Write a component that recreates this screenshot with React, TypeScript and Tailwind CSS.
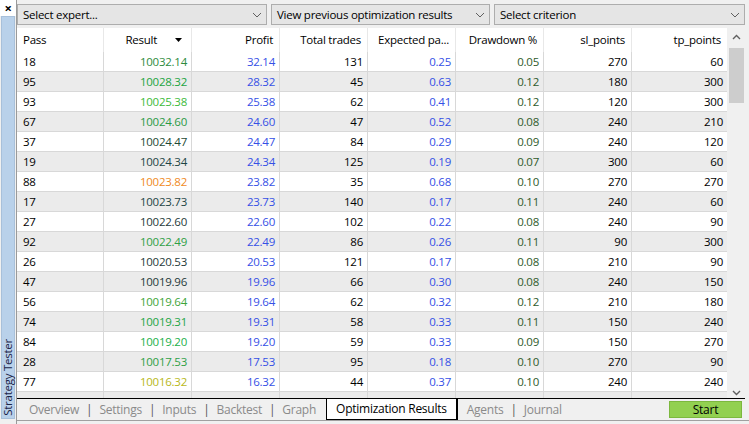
import React from 'react';

// Optimization results grid (MT5 strategy tester)

type Row = {
  pass: number;
  result: string;
  color: string;
  profit: string;
  trades: number;
  payoff: string;
  drawdown: string;
  sl: number;
  tp: number;
};

const ROWS: Row[] = [
  { pass: 18, result: '10032.14', color: '#2e8b3e', profit: '32.14', trades: 131, payoff: '0.25', drawdown: '0.05', sl: 270, tp: 60 },
  { pass: 95, result: '10028.32', color: '#22a43f', profit: '28.32', trades: 45, payoff: '0.63', drawdown: '0.12', sl: 180, tp: 300 },
  { pass: 93, result: '10025.38', color: '#3cba3a', profit: '25.38', trades: 62, payoff: '0.41', drawdown: '0.12', sl: 120, tp: 300 },
  { pass: 67, result: '10024.60', color: '#2a9a45', profit: '24.60', trades: 47, payoff: '0.52', drawdown: '0.08', sl: 240, tp: 210 },
  { pass: 37, result: '10024.47', color: '#1e4a35', profit: '24.47', trades: 84, payoff: '0.29', drawdown: '0.09', sl: 240, tp: 120 },
  { pass: 19, result: '10024.34', color: '#1e4545', profit: '24.34', trades: 125, payoff: '0.19', drawdown: '0.07', sl: 300, tp: 60 },
  { pass: 88, result: '10023.82', color: '#f08a24', profit: '23.82', trades: 35, payoff: '0.68', drawdown: '0.10', sl: 270, tp: 270 },
  { pass: 17, result: '10023.73', color: '#1e4545', profit: '23.73', trades: 140, payoff: '0.17', drawdown: '0.11', sl: 240, tp: 60 },
  { pass: 27, result: '10022.60', color: '#1f3a3a', profit: '22.60', trades: 102, payoff: '0.22', drawdown: '0.08', sl: 240, tp: 90 },
  { pass: 92, result: '10022.49', color: '#2fa045', profit: '22.49', trades: 86, payoff: '0.26', drawdown: '0.11', sl: 90, tp: 300 },
  { pass: 26, result: '10020.53', color: '#1f3a3a', profit: '20.53', trades: 121, payoff: '0.17', drawdown: '0.08', sl: 210, tp: 90 },
  { pass: 47, result: '10019.96', color: '#1f3a3a', profit: '19.96', trades: 66, payoff: '0.30', drawdown: '0.08', sl: 240, tp: 150 },
  { pass: 56, result: '10019.64', color: '#3ea53a', profit: '19.64', trades: 62, payoff: '0.32', drawdown: '0.12', sl: 210, tp: 180 },
  { pass: 74, result: '10019.31', color: '#23a545', profit: '19.31', trades: 58, payoff: '0.33', drawdown: '0.11', sl: 150, tp: 240 },
  { pass: 84, result: '10019.20', color: '#22b04a', profit: '19.20', trades: 59, payoff: '0.33', drawdown: '0.09', sl: 150, tp: 270 },
  { pass: 28, result: '10017.53', color: '#2fa045', profit: '17.53', trades: 95, payoff: '0.18', drawdown: '0.10', sl: 270, tp: 90 },
  { pass: 77, result: '10016.32', color: '#b8b820', profit: '16.32', trades: 44, payoff: '0.37', drawdown: '0.10', sl: 240, tp: 240 },
  { pass: 30, result: '10014.85', color: '#b8b820', profit: '14.85', trades: 40, payoff: '0.37', drawdown: '0.11', sl: 270, tp: 210 },
];

const TABS_LEFT = ['Overview', 'Settings', 'Inputs', 'Backtest', 'Graph'];

const Chevron = () => (
  <svg width="10" height="6" viewBox="0 0 10 6" className="shrink-0">
    <path d="M1 1 L5 5 L9 1" fill="none" stroke="#606060" strokeWidth="1" />
  </svg>
);

const Dropdown = ({ label, width }: { label: string; width: string }) => (
  <div className={`${width} h-[21px] flex items-center justify-between pl-[5px] pr-[4px] bg-[#e5e5e5] border border-[#adadad] text-[#000]`}>
    <span>{label}</span>
    <Chevron />
  </div>
);

const Sep = () => <span className="mx-[7px] text-[#555]">|</span>;

const cell = 'h-full flex items-center justify-end pr-[4px] border-r border-[#d8d8d8]';

export default function App() {
  return (
    <div
      className="w-[749px] h-[424px] flex bg-[#f0f0f0] text-[11.5px] tracking-[-0.25px] overflow-hidden"
      style={{ fontFamily: '"Segoe UI", "Open Sans", "Noto Sans", sans-serif' }}
    >
      {/* Left strip */}
      <div className="w-[17px] flex flex-col border-r border-[#9a9a9a]">
        <div className="h-[16px] bg-white flex items-center justify-center text-[13px] font-bold leading-none text-black">
          ×
        </div>
        <div className="flex-1 mx-[1px] mb-[5px] bg-[#b9d1ea] border border-[#a8c0da] flex items-end justify-center pb-[2px]">
          <span className="[writing-mode:vertical-rl] rotate-180 text-[11.5px] text-[#1b2448] leading-none">
            Strategy Tester
          </span>
        </div>
      </div>

      {/* Main */}
      <div className="flex-1 flex flex-col min-w-0">
        {/* Selectors */}
        <div className="h-[28px] flex items-start pt-[4px] gap-[4px] pr-[4px]">
          <Dropdown label="Select expert..." width="w-[250px]" />
          <Dropdown label="View previous optimization results" width="w-[219px]" />
          <Dropdown label="Select criterion" width="flex-1" />
        </div>

        {/* Grid + scrollbar */}
        <div className="h-[370px] flex mr-[4px] overflow-hidden">
          <div className="flex-1 flex flex-col bg-white min-w-0 overflow-hidden">
            <div className="h-[24px] shrink-0 grid grid-cols-[87px_88px_88px_88px_88px_88px_88px_1fr] text-black">
              <div className="h-full flex items-center pl-[6px] border-r border-[#e8e8e8]">Pass</div>
              <div className="h-full flex items-center justify-end pr-[9px] border-r border-[#e8e8e8]">
                <span className="mr-[18px]">Result</span>
                <svg width="7" height="4" viewBox="0 0 7 4">
                  <path d="M0 0 H7 L3.5 4 Z" fill="#000" />
                </svg>
              </div>
              <div className="h-full flex items-center justify-end pr-[6px] border-r border-[#e8e8e8]">Profit</div>
              <div className="h-full flex items-center justify-end pr-[6px] border-r border-[#e8e8e8]">Total trades</div>
              <div className="h-full flex items-center justify-end pr-[6px] border-r border-[#e8e8e8]">Expected pa...</div>
              <div className="h-full flex items-center justify-end pr-[6px] border-r border-[#e8e8e8]">Drawdown %</div>
              <div className="h-full flex items-center justify-end pr-[6px] border-r border-[#e8e8e8]">sl_points</div>
              <div className="h-full flex items-center justify-end pr-[6px]">tp_points</div>
            </div>
            {ROWS.map((r, i) => (
              <div
                key={r.pass}
                className={`h-[20px] shrink-0 grid grid-cols-[87px_88px_88px_88px_88px_88px_88px_1fr] border-b border-[#d8d8d8] ${
                  i % 2 === 1 ? 'bg-[#ebebeb]' : 'bg-white'
                }`}
              >
                <div className="h-full flex items-center pl-[6px] border-r border-[#d8d8d8] text-black">{r.pass}</div>
                <div className={cell} style={{ color: r.color }}>{r.result}</div>
                <div className={`${cell} text-[#3550e6]`}>{r.profit}</div>
                <div className={`${cell} text-black`}>{r.trades}</div>
                <div className={`${cell} text-[#3550e6]`}>{r.payoff}</div>
                <div className={`${cell} text-[#2f5a2a]`}>{r.drawdown}</div>
                <div className={`${cell} text-black`}>{r.sl}</div>
                <div className="h-full flex items-center justify-end pr-[4px] text-black">{r.tp}</div>
              </div>
            ))}
          </div>
          {/* Scrollbar */}
          <div className="w-[18px] shrink-0 bg-[#f0f0f0] flex flex-col items-center">
            <div className="h-[18px] flex items-center justify-center">
              <svg width="9" height="6" viewBox="0 0 9 6">
                <path d="M1 5 L4.5 1.5 L8 5" fill="none" stroke="#606060" strokeWidth="1.4" />
              </svg>
            </div>
            <div className="w-[15px] h-[55px] mt-[2px] bg-[#cdcdcd]" />
            <div className="flex-1" />
            <div className="h-[18px] flex items-center justify-center mb-[-4px]">
              <svg width="9" height="6" viewBox="0 0 9 6">
                <path d="M1 1 L4.5 4.5 L8 1" fill="none" stroke="#606060" strokeWidth="1.4" />
              </svg>
            </div>
          </div>
        </div>

        {/* Tabs */}
        <div className="h-[22px] flex items-stretch border-t border-black mr-[4px] text-[12px] leading-[16px]">
          <div className="flex items-center pl-[12px] pr-[10px] text-[#8a8a8a]">
            {TABS_LEFT.map((t, i) => (
              <React.Fragment key={t}>
                {i > 0 && <Sep />}
                <span>{t}</span>
              </React.Fragment>
            ))}
          </div>
          <div className="-mt-[1px] flex items-center px-[9px] bg-white border border-black border-r-2 text-black">
            Optimization Results
          </div>
          <div className="flex items-center pl-[9px] text-[#8a8a8a]">
            <span>Agents</span>
            <Sep />
            <span>Journal</span>
          </div>
          <div className="flex-1" />
          <div className="my-[2px] mr-[3px] w-[73px] flex items-center justify-center bg-[#92d050] border border-[#7cb83e] text-black">
            Start
          </div>
        </div>
        <div className="flex-1 border-t border-[#a0a0a0]" />
      </div>
    </div>
  );
}
